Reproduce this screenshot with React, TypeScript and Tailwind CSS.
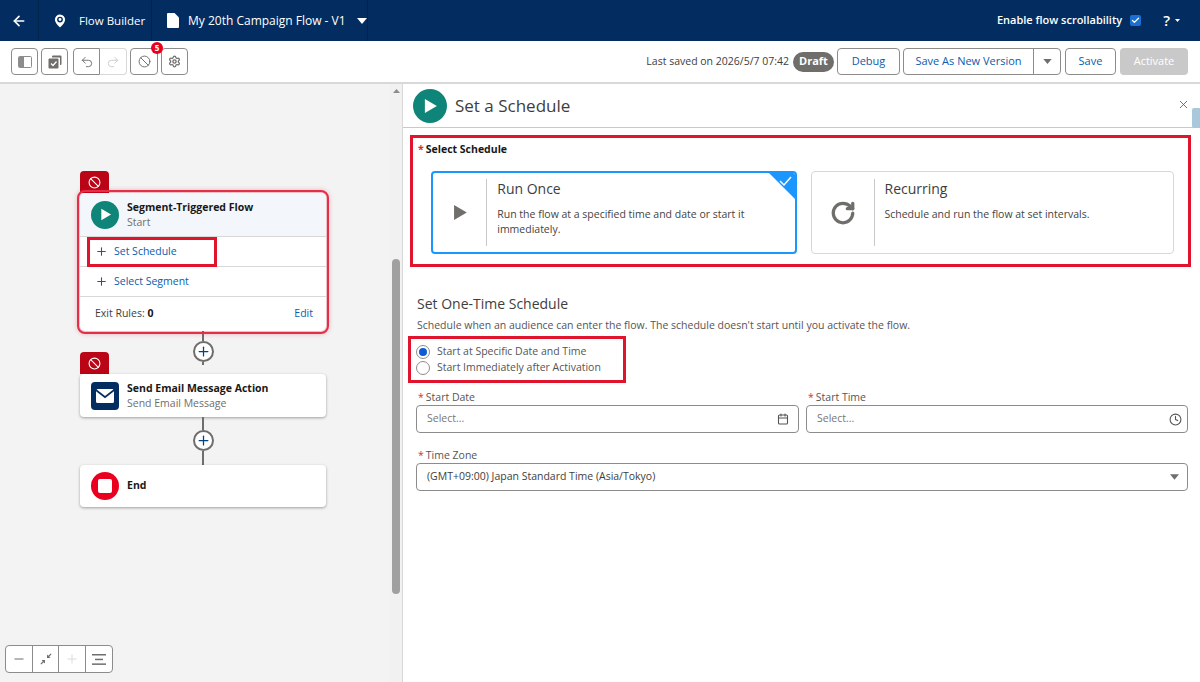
import React from "react";
import { ArrowLeft, MapPin, ChevronDown, Undo2, Redo2, Ban, Settings, Plus, Minus, X, Check, Calendar, Clock, RotateCw } from "lucide-react";

const Play = ({ s = 14 }: { s?: number }) => (
  <svg width={s} height={s} viewBox="0 0 14 14"><path d="M2.5 0.8 L13 7 L2.5 13.2 Z" fill="currentColor" /></svg>
);

const Caret = ({ w = 10, h = 6 }: { w?: number; h?: number }) => (
  <svg width={w} height={h} viewBox="0 0 10 6"><path d="M0 0 H10 L5 6 Z" fill="currentColor" /></svg>
);

const TB = ({ children, className = "" }: { children: React.ReactNode; className?: string }) => (
  <div className={`flex h-[27px] items-center justify-center border border-[#8c8c8c] bg-white text-[#706e6b] ${className}`}>{children}</div>
);

const Star = () => <span className="mr-[2px] text-[#c23934]">*</span>;

const ErrorTab = () => (
  <div className="flex h-[22px] w-[29px] items-center justify-center rounded-t-[4px] bg-[#ba0517] text-white">
    <Ban size={13} strokeWidth={2} />
  </div>
);

const Connector = ({ h1, h2 }: { h1: number; h2: number }) => (
  <div className="flex w-[246px] flex-col items-center">
    <div className="w-[2px] bg-[#706e6b]" style={{ height: h1 }} />
    <div className="flex h-[21px] w-[21px] items-center justify-center rounded-full border-2 border-[#706e6b] bg-white text-[#014486]">
      <Plus size={15} strokeWidth={2} />
    </div>
    <div className="w-[2px] bg-[#706e6b]" style={{ height: h2 }} />
  </div>
);

const RedBox = ({ className = "", children }: { className?: string; children: React.ReactNode }) => (
  <div className={`border-[3px] border-[#e0142c] ${className}`}>{children}</div>
);

export default function App() {
  return (
    <div className="flex h-[682px] w-[1200px] flex-col overflow-hidden bg-white font-['Open_Sans','Noto_Sans',sans-serif] text-[#444]">
      {/* Header */}
      <div className="flex h-[41px] shrink-0 items-center bg-[#032d60] text-white">
        <div className="flex h-full w-[39px] items-center justify-center border-r border-[#02234b]">
          <ArrowLeft size={16} strokeWidth={2.5} />
        </div>
        <div className="flex h-full w-[113px] items-center gap-[12px] border-r border-[#02234b] pl-[14px] text-[11.5px]">
          <MapPin size={14} fill="white" stroke="#032d60" strokeWidth={2} className="scale-125" />
          <span>Flow Builder</span>
        </div>
        <div className="flex h-full w-[216px] items-center border-r border-[#02234b] pl-[15px] text-[12px]">
          <svg width="12" height="15" viewBox="0 0 12 15"><path d="M1 0 H7.5 L12 4.5 V14 a1 1 0 0 1 -1 1 H1 a1 1 0 0 1 -1 -1 V1 a1 1 0 0 1 1 -1 Z" fill="white" /></svg>
          <span className="ml-[9px]">My 20th Campaign Flow - V1</span>
          <span className="ml-[11px]"><Caret /></span>
        </div>
        <div className="ml-auto flex items-center">
          <span className="text-[11px] font-semibold">Enable flow scrollability</span>
          <div className="ml-[8px] flex h-[11px] w-[11px] items-center justify-center rounded-[2px] bg-[#1b6fd0]">
            <Check size={9} strokeWidth={3.5} />
          </div>
          <span className="ml-[22px] text-[15px] font-semibold">?</span>
          <span className="mr-[20px] ml-[5px]"><Caret w={5} h={3} /></span>
        </div>
      </div>

      {/* Toolbar */}
      <div className="flex h-[43px] shrink-0 items-center border-b-2 border-[#d8d8d8] pr-[12px] pl-[11px]">
        <TB className="w-[27px] rounded-[4px]">
          <svg width="14" height="12" viewBox="0 0 14 12"><rect x="0.5" y="0.5" width="13" height="11" rx="1" fill="none" stroke="#8c8c8c" /><rect x="1" y="1" width="5" height="10" fill="#8c8c8c" /></svg>
        </TB>
        <TB className="ml-[3px] w-[27px] rounded-[4px]">
          <svg width="14" height="14" viewBox="0 0 14 14" fill="#706e6b"><path d="M4 1.5 a1 1 0 0 1 1 -1 h7.5 a1 1 0 0 1 1 1 V9 a1 1 0 0 1 -1 1 H12 V3 a.5.5 0 0 0 -.5 -.5 H4 Z" /><rect x="0.5" y="3.5" width="10" height="10" rx="1" /><path d="M3 8.5 L5 10.5 L8.5 6.5" stroke="white" strokeWidth="1.3" fill="none" /></svg>
        </TB>
        <TB className="ml-[5px] w-[27px] rounded-l-[4px]"><Undo2 size={14} strokeWidth={1.6} /></TB>
        <TB className="w-[27px] rounded-r-[4px] border-l-0 border-[#d8d8d8] text-[#c9c9c9]"><Redo2 size={14} strokeWidth={1.6} /></TB>
        <div className="relative ml-[3px]">
          <TB className="w-[28px] rounded-[4px]"><Ban size={13} strokeWidth={1.8} /></TB>
          <div className="absolute top-[-6px] right-[-5px] flex h-[12px] w-[12px] items-center justify-center rounded-full bg-[#ea001e] text-[8px] font-bold text-white">5</div>
        </div>
        <TB className="ml-[3px] w-[27px] rounded-[4px]"><Settings size={13} strokeWidth={2.4} /></TB>

        <span className="ml-auto text-[10.5px] text-[#3e3e3c]">Last saved on 2026/5/7 07:42</span>
        <div className="ml-[4px] flex h-[20px] w-[41px] items-center justify-center rounded-full bg-[#706e6b] text-[11px] font-bold text-white">Draft</div>
        <div className="ml-[3px] flex h-[27px] w-[63px] items-center justify-center rounded-[4px] border border-[#8c8c8c] text-[11px] text-[#0b5cab]">Debug</div>
        <div className="ml-[3px] flex h-[27px] w-[158px] items-center rounded-[4px] border border-[#8c8c8c] text-[11px] text-[#0b5cab]">
          <div className="flex h-full flex-1 items-center justify-center border-r border-[#8c8c8c]">Save As New Version</div>
          <div className="flex w-[26px] justify-center text-[#706e6b]"><Caret w={9} h={5} /></div>
        </div>
        <div className="ml-[4px] flex h-[27px] w-[51px] items-center justify-center rounded-[4px] border border-[#8c8c8c] text-[11px] text-[#0b5cab]">Save</div>
        <div className="ml-[4px] flex h-[27px] w-[68px] items-center justify-center rounded-[4px] bg-[#c9c9c9] text-[11px] text-white">Activate</div>
      </div>

      {/* Body */}
      <div className="flex min-h-0 flex-1">
        {/* Canvas */}
        <div className="relative flex w-[390px] shrink-0 flex-col bg-[#f3f3f3] pt-[87px] pl-[80px]">
          <ErrorTab />
          <div className="relative z-10 w-[246px] rounded-[5px] bg-white outline-2 outline-offset-[1px] outline-[#e3304a] shadow-[0_0_5px_3px_rgba(234,0,30,0.25)]">
            <div className="flex h-[44px] items-center rounded-t-[5px] border-b border-[#d8d8d8] bg-[#f3f6fa] pl-[11px]">
              <div className="flex h-[28px] w-[28px] items-center justify-center rounded-full bg-[#0f8478] text-white"><Play s={13} /></div>
              <div className="ml-[8px] text-[10.5px] leading-[15px]">
                <div className="font-bold text-[#181818]">Segment-Triggered Flow</div>
                <div className="text-[#706e6b]">Start</div>
              </div>
            </div>
            <div className="flex h-[30px] items-center border-b border-[#d8d8d8] pl-[15px] text-[10.5px] text-[#0b5cab]">
              <Plus size={13} strokeWidth={2} /><span className="ml-[6px]">Set Schedule</span>
            </div>
            <div className="flex h-[30px] items-center border-b border-[#d8d8d8] pl-[15px] text-[10.5px] text-[#0b5cab]">
              <Plus size={13} strokeWidth={2} /><span className="ml-[6px]">Select Segment</span>
            </div>
            <div className="flex h-[34px] items-center justify-between pr-[13px] pl-[15px] text-[10.5px]">
              <span className="text-[#3e3e3c]">Exit Rules: <b className="text-[#181818]">0</b></span>
              <span className="text-[#0b5cab]">Edit</span>
            </div>
            <RedBox className="absolute top-[44px] left-[7px] h-[30px] w-[130px]"><span /></RedBox>
          </div>
          <Connector h1={10} h2={3} />
          <div className="mt-[-13px] ml-0"><ErrorTab /></div>
          <div className="flex h-[43px] w-[246px] items-center rounded-[4px] bg-white pl-[11px] shadow-[0_1px_3px_rgba(0,0,0,0.35)]">
            <div className="flex h-[28px] w-[28px] items-center justify-center rounded-[4px] bg-[#032d60] text-white">
              <svg width="18" height="14" viewBox="0 0 18 14" fill="white"><path d="M1.5 0 H16.5 a1 1 0 0 1 .8 .5 L9 7 L.7 .5 A1 1 0 0 1 1.5 0 Z" /><path d="M0 2.3 L9 9.3 L18 2.3 V12.5 a1.5 1.5 0 0 1 -1.5 1.5 H1.5 A1.5 1.5 0 0 1 0 12.5 Z" /></svg>
            </div>
            <div className="ml-[8px] text-[10.5px] leading-[15px]">
              <div className="font-bold text-[#181818]">Send Email Message Action</div>
              <div className="text-[#706e6b]">Send Email Message</div>
            </div>
          </div>
          <Connector h1={13} h2={14} />
          <div className="flex h-[42px] w-[246px] items-center rounded-[4px] bg-white pl-[11px] shadow-[0_1px_3px_rgba(0,0,0,0.35)]">
            <div className="flex h-[28px] w-[28px] items-center justify-center rounded-full bg-[#ea001e]">
              <div className="h-[14px] w-[14px] rounded-[2px] bg-white" />
            </div>
            <span className="ml-[8px] text-[10.5px] font-bold text-[#181818]">End</span>
          </div>
          {/* zoom controls */}
          <div className="absolute bottom-[9px] left-[5px] flex h-[28px] w-[108px] rounded-[4px] border border-[#8c8c8c] bg-white text-[#706e6b]">
            <div className="flex w-[27px] items-center justify-center border-r border-[#8c8c8c]"><Minus size={14} strokeWidth={2} /></div>
            <div className="flex w-[26px] items-center justify-center border-r border-[#8c8c8c]">
              <svg width="12" height="12" viewBox="0 0 12 12" fill="#706e6b"><path d="M7 5 V1.5 L8.3 2.8 L10.8 .5 L11.5 1.2 L9.2 3.7 L10.5 5 Z M5 7 V10.5 L3.7 9.2 L1.2 11.5 L.5 10.8 L2.8 8.3 L1.5 7 Z" /></svg>
            </div>
            <div className="flex w-[27px] items-center justify-center border-r border-[#8c8c8c] text-[#d8d8d8]"><Plus size={14} strokeWidth={1.6} /></div>
            <div className="flex flex-1 items-center justify-center">
              <svg width="14" height="11" viewBox="0 0 14 11" fill="#706e6b"><rect width="14" height="1.5" /><rect x="3" y="4.7" width="8" height="1.5" /><rect y="9.4" width="14" height="1.5" /></svg>
            </div>
          </div>
        </div>

        {/* Scrollbar */}
        <div className="relative flex w-[13px] shrink-0 flex-col items-center border-r border-[#d8d8d8] bg-[#f1f1f1] pt-[5px] text-[#8c8c8c]">
          <svg width="7" height="4" viewBox="0 0 7 4"><path d="M0 4 L3.5 0 L7 4 Z" fill="currentColor" /></svg>
          <div className="mt-[166px] h-[335px] w-[8px] rounded-[4px] bg-[#a0a0a0]" />
        </div>

        {/* Panel */}
        <div className="relative min-w-0 flex-1 bg-white">
          <div className="flex h-[44px] items-center border-b border-[#c9c9c9] pl-[10px]">
            <div className="flex h-[34px] w-[34px] items-center justify-center rounded-full bg-[#0f8478] text-white"><Play s={16} /></div>
            <span className="ml-[8px] text-[17px] text-[#3e3e3c]">Set a Schedule</span>
            <X size={13} strokeWidth={1.5} className="absolute top-[14px] right-[10px] text-[#555]" />
            <div className="absolute top-[24px] right-0 h-[20px] w-[8px] rounded-l-[2px] bg-[#a9c8dc]" />
          </div>

          <RedBox className="mt-[7px] ml-[7px] h-[132px] w-[781px] pt-[4px] pr-[14px] pl-[5px]">
            <div className="text-[10.5px] leading-[14px] font-bold text-[#181818]"><Star />Select Schedule</div>
            <div className="mt-[15px] ml-[13px] flex gap-[14px]">
              <div className="relative flex h-[83px] flex-1 overflow-hidden rounded-[4px] border-2 border-[#1b96ff] py-[6px]">
                <div className="flex w-[62px] items-center justify-center border-r border-[#c9c9c9] pl-[0px] text-[#706e6b]"><Play s={17} /></div>
                <div className="pt-[1px] pr-[24px] pl-[10px]">
                  <div className="text-[14px] leading-[18px] text-[#3e3e3c]">Run Once</div>
                  <div className="mt-[9px] text-[10.5px] leading-[15px] text-[#444]">Run the flow at a specified time and date or start it immediately.</div>
                </div>
                <svg width="26" height="26" viewBox="0 0 26 26" className="absolute top-0 right-0"><path d="M0 0 H26 V26 Z" fill="#1b96ff" /><path d="M11 8 L15 12 L22 4" stroke="white" strokeWidth="1.5" fill="none" /></svg>
              </div>
              <div className="flex h-[83px] flex-1 rounded-[4px] border border-[#d8d8d8] py-[7px]">
                <div className="flex w-[63px] items-center justify-center border-r border-[#c9c9c9] text-[#706e6b]"><RotateCw size={26} strokeWidth={3} /></div>
                <div className="pt-[1px] pl-[10px]">
                  <div className="text-[14px] leading-[18px] text-[#3e3e3c]">Recurring</div>
                  <div className="mt-[9px] text-[10.5px] leading-[15px] text-[#444]">Schedule and run the flow at set intervals.</div>
                </div>
              </div>
            </div>
          </RedBox>

          <div className="mt-[27px] ml-[14px] text-[14px] leading-[20px] text-[#3e3e3c]">Set One-Time Schedule</div>
          <div className="mt-[3px] ml-[14px] text-[10.5px] leading-[16px] text-[#555]">Schedule when an audience can enter the flow. The schedule doesn't start until you activate the flow.</div>
          <RedBox className="mt-[3px] ml-[5px] flex h-[47px] w-[218px] flex-col justify-center pl-[5px] text-[10.5px] text-[#555]">
            <div className="flex h-[16px] items-center">
              <div className="flex h-[14px] w-[14px] items-center justify-center rounded-full border border-[#8c8c8c]"><div className="h-[8px] w-[8px] rounded-full bg-[#0b5cd5]" /></div>
              <span className="ml-[7px]">Start at Specific Date and Time</span>
            </div>
            <div className="flex h-[16px] items-center">
              <div className="h-[14px] w-[14px] rounded-full border border-[#8c8c8c]" />
              <span className="ml-[7px]">Start Immediately after Activation</span>
            </div>
          </RedBox>

          <div className="mt-[7px] ml-[13px] grid w-[772px] grid-cols-[383px_382px] gap-x-[7px] text-[10.5px] text-[#555]">
            <div>
              <div className="h-[15px] pl-[2px] leading-[15px]"><Star />Start Date</div>
              <div className="flex h-[28px] items-center justify-between rounded-[4px] border border-[#8c8c8c] pr-[9px] pl-[10px] text-[#777]">
                <span>Select...</span><Calendar size={12} strokeWidth={2.2} className="text-[#555]" />
              </div>
            </div>
            <div>
              <div className="h-[15px] pl-[2px] leading-[15px]"><Star />Start Time</div>
              <div className="flex h-[28px] items-center justify-between rounded-[4px] border border-[#8c8c8c] pr-[5px] pl-[10px] text-[#777]">
                <span>Select...</span><Clock size={13} strokeWidth={2} className="text-[#555]" />
              </div>
            </div>
            <div className="col-span-2 mt-[15px]">
              <div className="h-[15px] pl-[2px] leading-[15px]"><Star />Time Zone</div>
              <div className="flex h-[28px] items-center justify-between rounded-[4px] border border-[#8c8c8c] pr-[8px] pl-[10px] text-[#3e3e3c]">
                <span>(GMT+09:00) Japan Standard Time (Asia/Tokyo)</span>
                <span className="text-[#706e6b]"><Caret w={9} h={6} /></span>
              </div>
            </div>
          </div>
        </div>
      </div>
    </div>
  );
}
